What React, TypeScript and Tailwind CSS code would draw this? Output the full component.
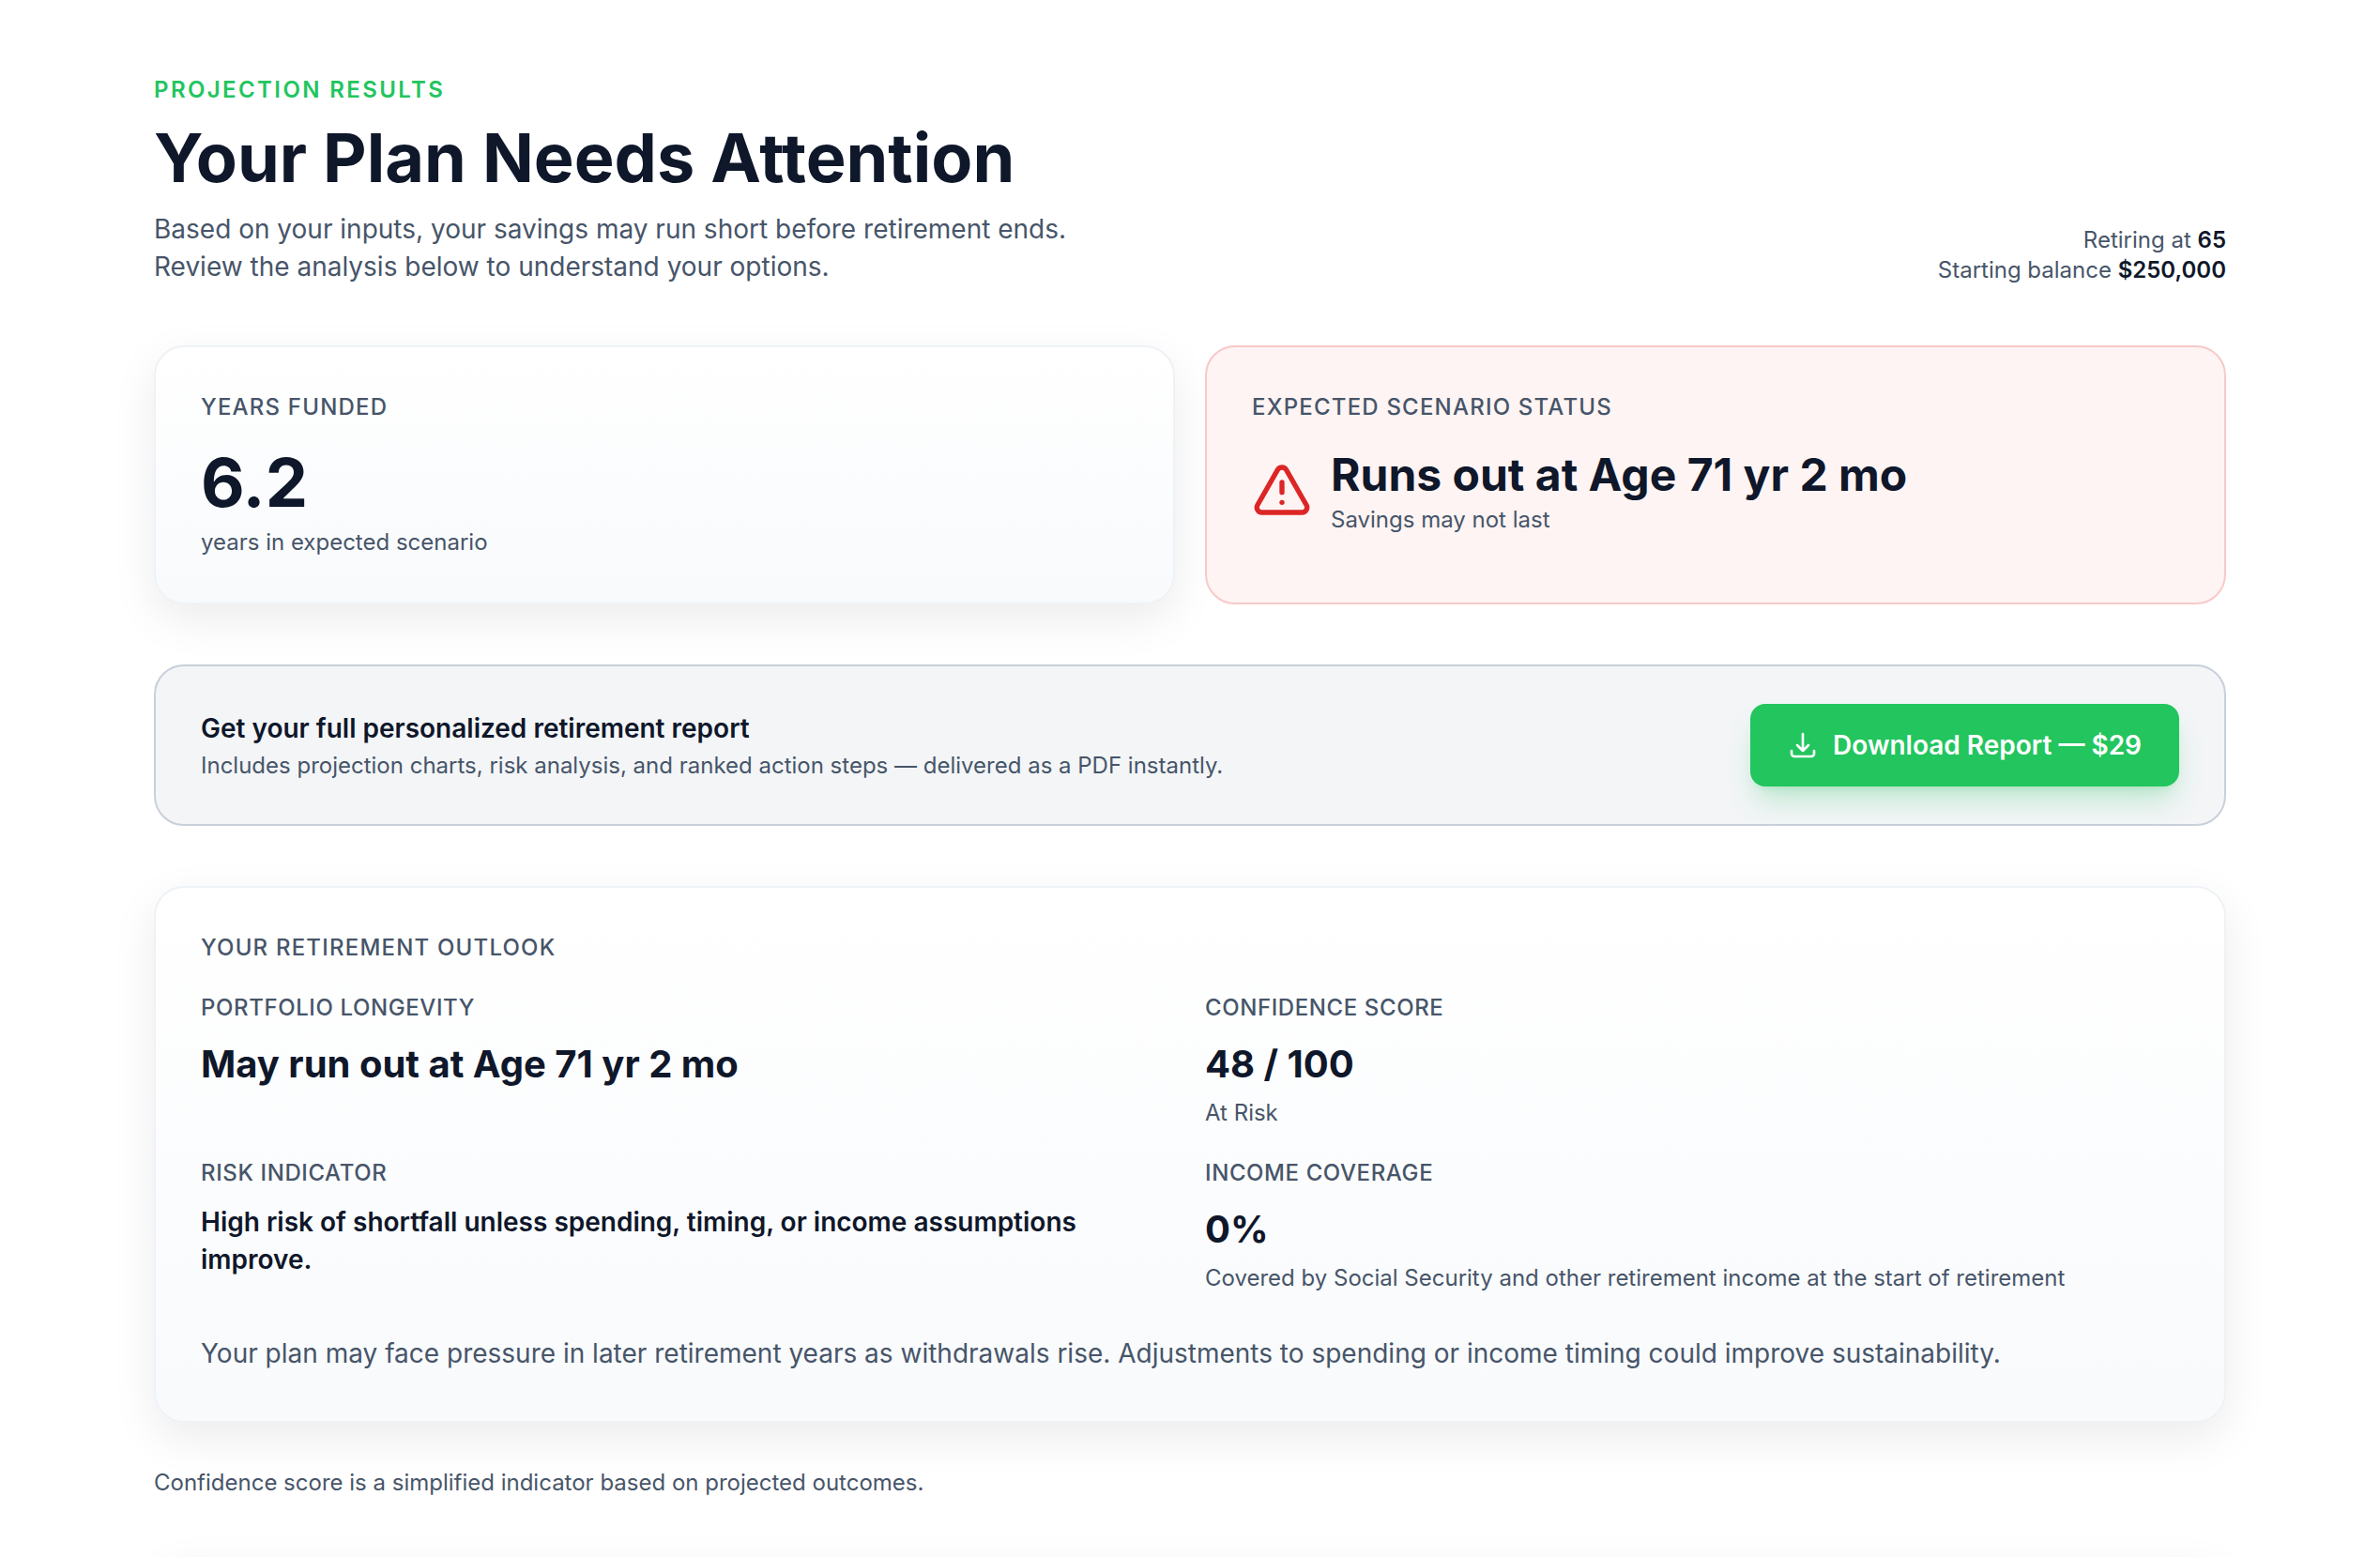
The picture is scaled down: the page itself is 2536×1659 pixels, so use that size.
import type { ReactNode } from 'react';
import { TriangleAlert } from 'lucide-react';

const cardClass =
  'rounded-[32px] border-2 border-[#eef2f6] bg-linear-to-b/srgb from-white to-[#f8fafc] p-12 shadow-[0_16px_48px_rgba(0,0,0,0.08)]';

interface SectionLabelProps {
  children: ReactNode;
}

function SectionLabel({ children }: SectionLabelProps) {
  return (
    <h2 className="text-[24px] leading-[32px] font-medium uppercase tracking-wider text-[#475569]">
      {children}
    </h2>
  );
}

interface OutlookItemProps {
  label: string;
  value: string;
  note?: string;
  small?: boolean;
}

function OutlookItem({ label, value, note, small }: OutlookItemProps) {
  return (
    <div>
      <dt className="text-[24px] leading-[32px] font-medium uppercase tracking-wide text-[#475569]">
        {label}
      </dt>
      <dd
        className={
          small
            ? 'mt-4 text-[28px] leading-[40px] font-semibold'
            : 'mt-4 text-[40px] leading-[56px] font-bold'
        }
      >
        {value}
      </dd>
      {note && <dd className="mt-2 text-[24px] leading-[32px] text-[#475569]">{note}</dd>}
    </div>
  );
}

function DownloadIcon() {
  return (
    <svg
      className="size-8 shrink-0"
      viewBox="0 0 24 24"
      fill="none"
      stroke="currentColor"
      strokeWidth={2}
      strokeLinecap="round"
      strokeLinejoin="round"
      aria-hidden="true"
    >
      <path d="M3 16.5v2.25A2.25 2.25 0 0 0 5.25 21h13.5A2.25 2.25 0 0 0 21 18.75V16.5M16.5 12 12 16.5m0 0L7.5 12m4.5 4.5V3" />
    </svg>
  );
}

const outlook: OutlookItemProps[] = [
  { label: 'Portfolio longevity', value: 'May run out at Age 71 yr 2 mo' },
  { label: 'Confidence score', value: '48 / 100', note: 'At Risk' },
  {
    label: 'Risk indicator',
    value: 'High risk of shortfall unless spending, timing, or income assumptions improve.',
    small: true,
  },
  {
    label: 'Income coverage',
    value: '0%',
    note: 'Covered by Social Security and other retirement income at the start of retirement',
  },
];

export default function App() {
  return (
    <div className="h-screen overflow-hidden bg-white font-['Inter',sans-serif] text-[#0f172a]">
      <main className="mx-auto max-w-[2304px] px-12 pt-20">
        <header className="flex items-end justify-between gap-12">
          <div>
            <p className="text-[24px] leading-[32px] font-semibold uppercase tracking-widest text-[#22c55e]">
              Projection results
            </p>
            <h1 className="mt-4 text-[72px] leading-[80px] font-bold">Your Plan Needs Attention</h1>
            <p className="mt-4 text-[28px] leading-[40px] text-[#475569]">
              Based on your inputs, your savings may run short before retirement ends.
              <br />
              Review the analysis below to understand your options.
            </p>
          </div>
          <div className="text-right text-[24px] leading-[32px] text-[#475569]">
            <p>
              Retiring at <span className="font-semibold text-[#0f172a]">65</span>
            </p>
            <p>
              Starting balance <span className="font-semibold text-[#0f172a]">$250,000</span>
            </p>
          </div>
        </header>

        <div className="mt-16 grid grid-cols-2 gap-8">
          <section className={cardClass}>
            <SectionLabel>Years funded</SectionLabel>
            <p className="mt-6 text-[72px] leading-[80px] font-bold">6.2</p>
            <p className="mt-2 text-[24px] leading-[32px] text-[#475569]">
              years in expected scenario
            </p>
          </section>

          <section className="rounded-[32px] border-2 border-[#f7c9c9] bg-[#fef4f3] p-12">
            <SectionLabel>Expected scenario status</SectionLabel>
            <div className="mt-6 flex items-center gap-5">
              <TriangleAlert className="size-16 shrink-0 text-[#dc2626]" strokeWidth={2} />
              <div>
                <p className="text-[48px] leading-[64px] font-bold">Runs out at Age 71 yr 2 mo</p>
                <p className="text-[24px] leading-[32px] text-[#475569]">Savings may not last</p>
              </div>
            </div>
          </section>
        </div>

        <section className="mt-16 flex items-center justify-between gap-8 rounded-[32px] border-2 border-[#c8d0da] bg-[#f3f5f7] px-12 py-10">
          <div>
            <h2 className="text-[28px] leading-[40px] font-semibold">
              Get your full personalized retirement report
            </h2>
            <p className="mt-1 text-[24px] leading-[32px] text-[#475569]">
              Includes projection charts, risk analysis, and ranked action steps — delivered as a
              PDF instantly.
            </p>
          </div>
          <button
            type="button"
            className="flex items-center gap-4 rounded-2xl bg-[#22c55e] px-10 py-6 text-[28px] leading-[40px] font-semibold text-white shadow-[0_20px_30px_-6px_rgba(34,197,94,0.25),0_8px_12px_-8px_rgba(34,197,94,0.25)]"
          >
            <DownloadIcon />
            Download Report — $29
          </button>
        </section>

        <section className={`mt-16 ${cardClass}`}>
          <SectionLabel>Your retirement outlook</SectionLabel>
          <dl className="mt-8 grid grid-cols-2 gap-8">
            {outlook.map((item) => (
              <OutlookItem key={item.label} {...item} />
            ))}
          </dl>
          <p className="mt-10 text-[28px] leading-[48px] text-[#475569]">
            Your plan may face pressure in later retirement years as withdrawals rise. Adjustments
            to spending or income timing could improve sustainability.
          </p>
        </section>

        <p className="mt-12 text-[24px] leading-[32px] text-[#475569]">
          Confidence score is a simplified indicator based on projected outcomes.
        </p>

        <section className={`mt-16 min-h-80 ${cardClass}`} />
      </main>
    </div>
  );
}
